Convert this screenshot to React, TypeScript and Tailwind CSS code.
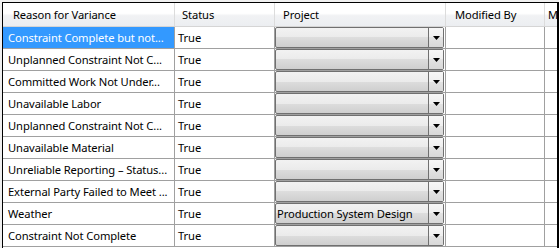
const rows = [
  { reason: "Constraint Complete but not...", project: "" },
  { reason: "Unplanned Constraint Not C...", project: "" },
  { reason: "Committed Work Not Under...", project: "" },
  { reason: "Unavailable Labor", project: "" },
  { reason: "Unplanned Constraint Not C...", project: "" },
  { reason: "Unavailable Material", project: "" },
  { reason: "Unreliable Reporting – Status...", project: "" },
  { reason: "External Party Failed to Meet ...", project: "" },
  { reason: "Weather", project: "Production System Design" },
  { reason: "Constraint Not Complete", project: "" },
];

function ComboCell({ value }: { value: string }) {
  return (
    <div className="flex h-[21px] w-[169px] rounded-[2px] border border-[#707070] bg-[linear-gradient(#f2f2f2_0%,#ebebeb_50%,#dddddd_50%,#cfcfcf_100%)]">
      <div className="flex flex-1 items-center overflow-hidden whitespace-nowrap pl-[1px] text-black">
        {value}
      </div>
      <div className="flex w-[15px] items-center justify-center border-l border-[#707070] bg-[linear-gradient(#f7f7f7_0%,#efefef_50%,#e3e3e3_50%,#d8d8d8_100%)]">
        <svg width="7" height="4" viewBox="0 0 7 4">
          <path d="M0 0h7L3.5 4z" fill="#000" />
        </svg>
      </div>
    </div>
  );
}

export default function App() {
  return (
    <div
      className="h-[248px] w-[559px] overflow-hidden bg-[#f0f0f0] pl-[2px] pt-[2px] text-[11.2px] leading-none tracking-[-0.1px] text-black"
      style={{ fontFamily: '"Noto Sans", "Open Sans", sans-serif' }}
    >
      <div className="h-[246px] w-[557px] overflow-hidden border-l border-t border-r-2 border-black bg-white">
        <div className="flex h-[24px] border-b border-[#d5d5d5] bg-[linear-gradient(#ffffff_0%,#ffffff_45%,#f1f2f4_55%,#eceef1_100%)]">
          <div className="flex w-[172px] shrink-0 items-center border-r border-[#dcdcdc] pl-[10px] pt-[1px]">Reason for Variance</div>
          <div className="flex w-[100px] shrink-0 items-center border-r border-[#dcdcdc] pl-[7px] pt-[1px]">Status</div>
          <div className="flex w-[171px] shrink-0 items-center border-r border-[#dcdcdc] pl-[8px] pt-[1px]">Project</div>
          <div className="flex w-[99px] shrink-0 items-center border-r border-[#dcdcdc] pl-[9px] pt-[1px]">Modified By</div>
          <div className="flex min-w-0 flex-1 items-center overflow-hidden whitespace-nowrap pl-[3px] pt-[1px]">M</div>
        </div>
        {rows.map((row, i) => (
          <div key={i} className="flex h-[22px] border-b border-[#a0a0a0]">
            <div
              className={`flex w-[172px] shrink-0 items-center overflow-hidden whitespace-nowrap border-r border-[#a0a0a0] pl-[5px] ${
                i === 0 ? "bg-[#3399ff] text-white" : ""
              }`}
            >
              {row.reason}
            </div>
            <div className="flex w-[100px] shrink-0 items-center border-r border-[#a0a0a0] pl-[3px]">True</div>
            <div className="flex w-[171px] shrink-0 items-start border-r border-[#a0a0a0]">
              <ComboCell value={row.project} />
            </div>
            <div className="w-[99px] shrink-0 border-r border-[#a0a0a0]" />
            <div className="flex-1" />
          </div>
        ))}
      </div>
    </div>
  );
}
